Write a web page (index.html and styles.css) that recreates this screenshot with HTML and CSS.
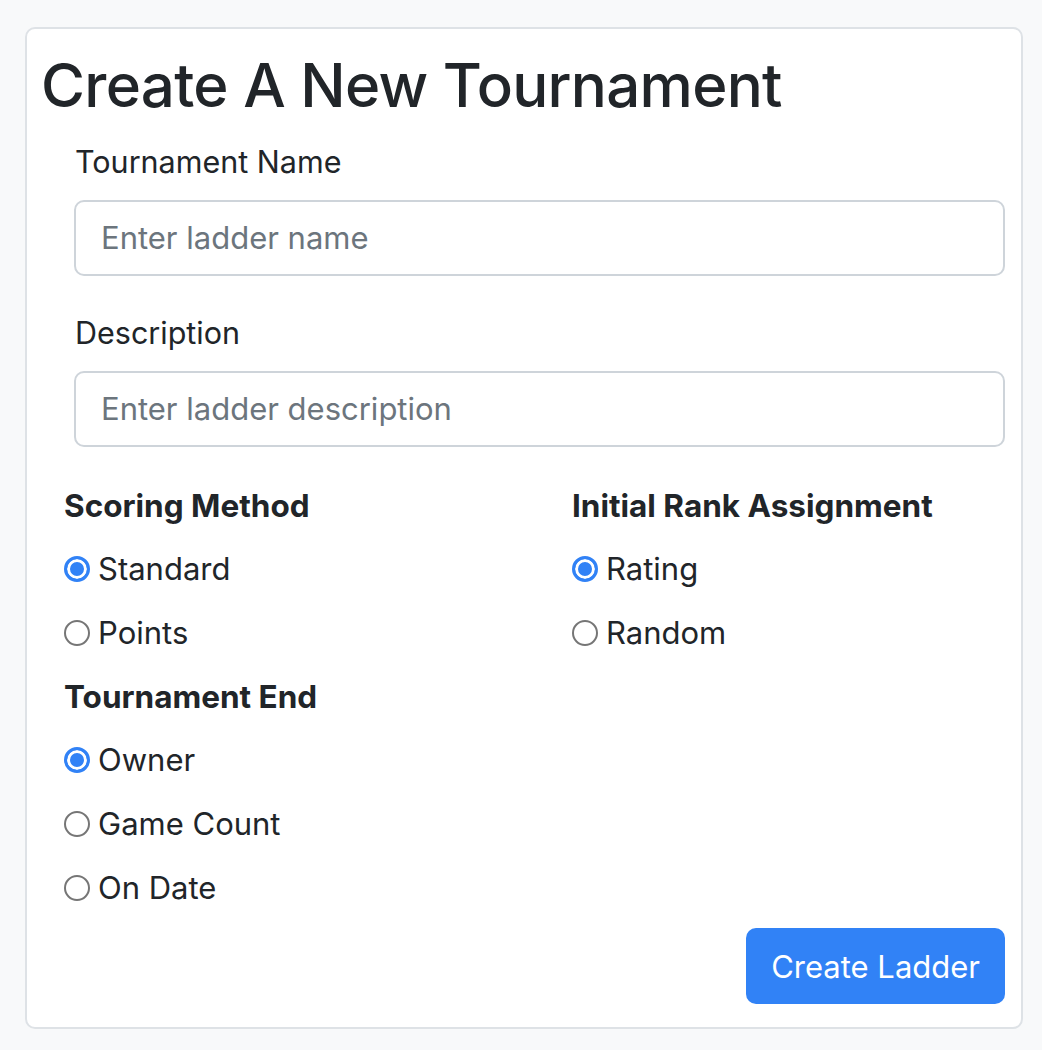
FILE: index.html
```html
<!DOCTYPE html>
<html lang="en">
<head>
<meta charset="utf-8">
<title>Create A New Tournament</title>
<link rel="stylesheet" href="styles.css">
</head>
<body>
<div class="page">
  <div class="card">
    <h1 class="title">Create A New Tournament</h1>
    <form class="form">
      <div class="field">
        <label class="label" for="name">Tournament Name</label>
        <input class="input" id="name" type="text" placeholder="Enter ladder name">
      </div>
      <div class="field">
        <label class="label" for="desc">Description</label>
        <input class="input" id="desc" type="text" placeholder="Enter ladder description">
      </div>
      <div class="options">
        <div class="col">
          <div class="group">
            <div class="group-title">Scoring Method</div>
            <label class="check"><input type="radio" name="scoring" checked><span>Standard</span></label>
            <label class="check"><input type="radio" name="scoring"><span>Points</span></label>
          </div>
          <div class="group">
            <div class="group-title">Tournament End</div>
            <label class="check"><input type="radio" name="end" checked><span>Owner</span></label>
            <label class="check"><input type="radio" name="end"><span>Game Count</span></label>
            <label class="check"><input type="radio" name="end"><span>On Date</span></label>
          </div>
        </div>
        <div class="col">
          <div class="group">
            <div class="group-title">Initial Rank Assignment</div>
            <label class="check"><input type="radio" name="rank" checked><span>Rating</span></label>
            <label class="check"><input type="radio" name="rank"><span>Random</span></label>
          </div>
        </div>
      </div>
      <div class="actions">
        <button type="button" class="btn">Create Ladder</button>
      </div>
    </form>
  </div>
</div>
</body>
</html>
```
FILE: styles.css
```css
* { box-sizing: border-box; }
html, body { margin: 0; padding: 0; }
body {
  background: #f8f9fa;
  color: #212529;
  font-family: Inter, "Noto Sans", "Liberation Sans", sans-serif;
  font-size: 32px;
  line-height: 1.5;
}
.page {
  padding: 27px 19px 22px 25px;
}
.card {
  background: #fff;
  border: 2px solid #dee2e6;
  border-radius: 10px;
  padding: 20px 16px 23px 14px;
}
.title {
  margin: 0 0 18px 0;
  font-size: 60px;
  font-weight: 500;
  line-height: 1.2;
  letter-spacing: -0.7px;
}
.form { margin: 0; }
.field {
  padding-left: 33px;
  margin-bottom: 34px;
}
.label {
  display: block;
  margin-bottom: 15px;
  padding-left: 1px;
  font-size: 30.5px;
}
.input {
  display: block;
  width: 100%;
  height: 76px;
  padding: 0 25px;
  font-family: inherit;
  font-size: 31px;
  color: #212529;
  background: #fff;
  border: 2px solid #ced4da;
  border-radius: 10px;
  outline: none;
}
.input::placeholder { color: #6c757d; }
.options {
  display: grid;
  grid-template-columns: 508px 1fr;
  padding-left: 23px;
  padding-top: 1px;
}
.group { margin-bottom: 15px; }
.group-title {
  font-weight: 700;
  font-size: 31.5px;
  margin-bottom: 16px;
}
.check {
  display: flex;
  align-items: center;
  height: 48px;
  margin-bottom: 16px;
  font-size: 31px;
}
.check input {
  appearance: none;
  -webkit-appearance: none;
  width: 26px;
  height: 26px;
  margin: 0 8px 0 0;
  border: 2px solid #767676;
  border-radius: 50%;
  background: #fff;
  flex: none;
}
.check input:checked {
  border: 3px solid #3182f6;
  background: #3182f6;
  box-shadow: inset 0 0 0 3px #fff;
}
.actions {
  display: flex;
  justify-content: flex-end;
}
.btn {
  height: 76px;
  padding: 0 25px;
  font-family: inherit;
  font-size: 31px;
  color: #fff;
  background: #3182f6;
  border: none;
  border-radius: 10px;
}
```
